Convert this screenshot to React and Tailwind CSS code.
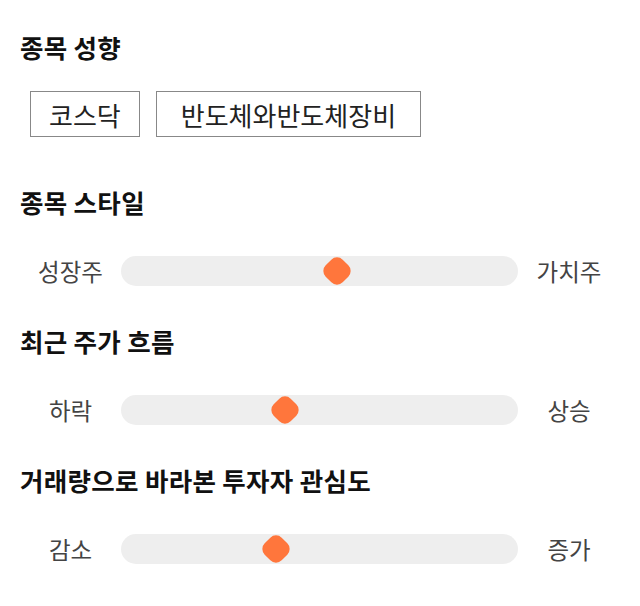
import React from 'react';

const font = { fontFamily: '"Noto Sans CJK KR", "Noto Sans", sans-serif' };

function Slider({ left, right, pos }) {
  return (
    <div className="flex items-center h-[30px]">
      <div className="w-[101px] text-center text-[23.5px] leading-[30px] text-[#444]">{left}</div>
      <div className="relative flex-1 h-[30px] rounded-full bg-[#eeeeee]">
        {/* thumb: rounded diamond */}
        <div
          className="absolute top-1/2 w-[24px] h-[24px] rounded-[8px] bg-[#ff763c] -translate-x-1/2 -translate-y-1/2 rotate-45"
          style={{ left: `${pos}%` }}
        />
      </div>
      <div className="w-[102px] text-center text-[23.5px] leading-[30px] text-[#444]">{right}</div>
    </div>
  );
}

function Heading({ children }) {
  return <h2 className="text-[25.5px] leading-[28px] font-bold tracking-[0.3px] text-[#111]">{children}</h2>;
}

export default function App() {
  const sliders = [
    { title: '종목 스타일', left: '성장주', right: '가치주', pos: 54.4 },
    { title: '최근 주가 흐름', left: '하락', right: '상승', pos: 41.3 },
    { title: '거래량으로 바라본 투자자 관심도', left: '감소', right: '증가', pos: 39 },
  ];

  return (
    <div className="w-[640px] h-[606px] bg-white pl-5 pt-[33px]" style={font}>
      <Heading>종목 성향</Heading>
      <div className="flex gap-4 mt-[30px] ml-[10px]">
        <div className="h-[46px] px-[18px] flex items-center border border-[#888] text-[26px] text-[#222]">코스닥</div>
        <div className="h-[46px] px-[24px] flex items-center border border-[#888] text-[26px] text-[#222]">반도체와반도체장비</div>
      </div>
      <div className="flex flex-col gap-[41px] mt-[51px] w-[600px]">
        {sliders.map((s) => (
          <div key={s.title} className="flex flex-col gap-[40px]">
            <Heading>{s.title}</Heading>
            <Slider left={s.left} right={s.right} pos={s.pos} />
          </div>
        ))}
      </div>
    </div>
  );
}
